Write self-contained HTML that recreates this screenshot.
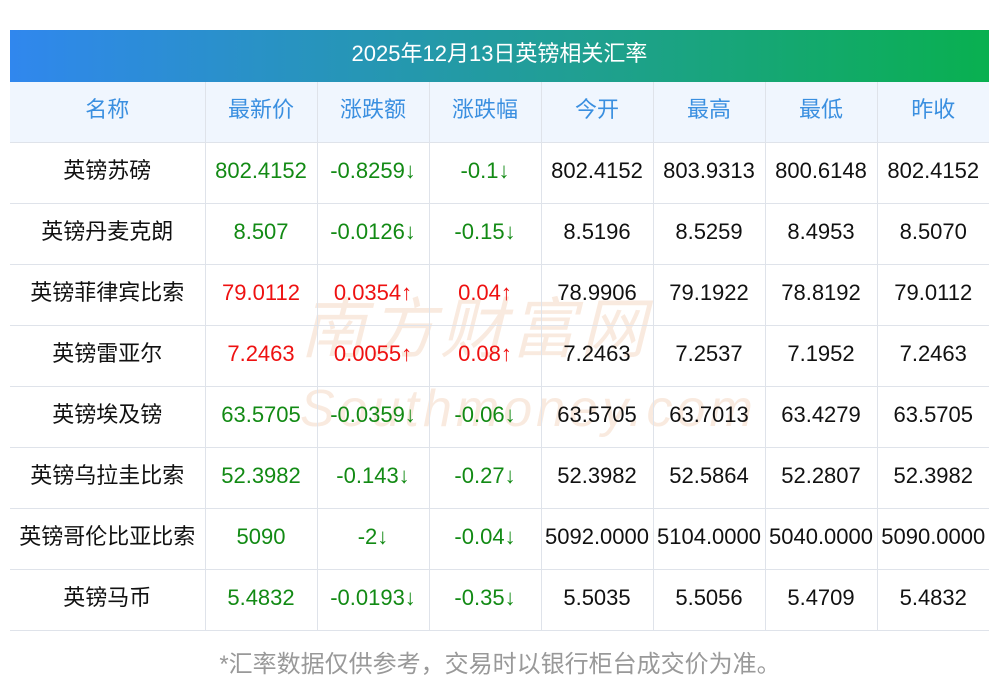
<!DOCTYPE html>
<html><head><meta charset="utf-8"><style>
body{margin:0;background:#fff;width:1000px;height:697px;overflow:hidden;font-family:"Liberation Sans","Noto Sans CJK SC",sans-serif;position:relative}
.title{position:absolute;left:10px;top:30px;width:979px;height:52px;background:linear-gradient(90deg,#3087ee,#1fa08f 60%,#09b050);color:#fff;font-size:22px;text-align:center;line-height:48px}
table{position:absolute;left:10px;top:82px;border-collapse:collapse;width:979px;table-layout:fixed}
td{height:61px;border:1px solid #dfe3ea;text-align:center;font-size:22px;line-height:22px;color:#111;padding:0 0 4px 0;white-space:nowrap;box-sizing:border-box}
tr td:first-child{border-left:none}tr td:last-child{border-right:none}
tr:first-child td{border-top:none;background:#f0f6fe;color:#3a8fe0;height:60px}
.g{color:#128a14}.r{color:#ee1111}
.foot{position:absolute;top:650px;width:1000px;text-align:center;color:#999;font-size:24px;line-height:30px}
.wm{position:absolute;left:300px;top:292px;font-size:66px;line-height:74px;color:rgba(235,185,150,.3);font-style:italic;letter-spacing:4px}
</style></head><body>
<div class="title">2025年12月13日英镑相关汇率</div>
<div class="wm">南方财富网<br><span style="font-size:52px">Southmoney.com</span></div>
<table>
<colgroup><col style="width:195px"><col span="8" style="width:112px"></colgroup>
<tr><td>名称</td><td>最新价</td><td>涨跌额</td><td>涨跌幅</td><td>今开</td><td>最高</td><td>最低</td><td>昨收</td></tr>
<tr><td>英镑苏磅</td><td class="g">802.4152</td><td class="g">-0.8259↓</td><td class="g">-0.1↓</td><td>802.4152</td><td>803.9313</td><td>800.6148</td><td>802.4152</td></tr>
<tr><td>英镑丹麦克朗</td><td class="g">8.507</td><td class="g">-0.0126↓</td><td class="g">-0.15↓</td><td>8.5196</td><td>8.5259</td><td>8.4953</td><td>8.5070</td></tr>
<tr><td>英镑菲律宾比索</td><td class="r">79.0112</td><td class="r">0.0354↑</td><td class="r">0.04↑</td><td>78.9906</td><td>79.1922</td><td>78.8192</td><td>79.0112</td></tr>
<tr><td>英镑雷亚尔</td><td class="r">7.2463</td><td class="r">0.0055↑</td><td class="r">0.08↑</td><td>7.2463</td><td>7.2537</td><td>7.1952</td><td>7.2463</td></tr>
<tr><td>英镑埃及镑</td><td class="g">63.5705</td><td class="g">-0.0359↓</td><td class="g">-0.06↓</td><td>63.5705</td><td>63.7013</td><td>63.4279</td><td>63.5705</td></tr>
<tr><td>英镑乌拉圭比索</td><td class="g">52.3982</td><td class="g">-0.143↓</td><td class="g">-0.27↓</td><td>52.3982</td><td>52.5864</td><td>52.2807</td><td>52.3982</td></tr>
<tr><td>英镑哥伦比亚比索</td><td class="g">5090</td><td class="g">-2↓</td><td class="g">-0.04↓</td><td>5092.0000</td><td>5104.0000</td><td>5040.0000</td><td>5090.0000</td></tr>
<tr><td>英镑马币</td><td class="g">5.4832</td><td class="g">-0.0193↓</td><td class="g">-0.35↓</td><td>5.5035</td><td>5.5056</td><td>5.4709</td><td>5.4832</td></tr>
</table>
<div class="foot">*汇率数据仅供参考，交易时以银行柜台成交价为准。</div>
</body></html>
